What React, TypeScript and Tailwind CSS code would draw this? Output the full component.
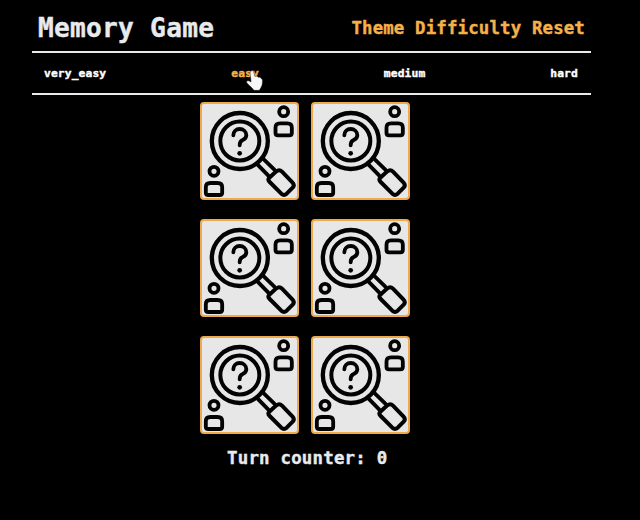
const cards = [0, 1, 2, 3, 4, 5];

function Person({ x, y }: { x: number; y: number }) {
  return (
    <g transform={`translate(${x} ${y})`}>
      <circle r="13.5" />
      <path d="M-24.5 64V48Q-24.5 35-11 35H11Q24.5 35 24.5 48V64Q24.5 71 17 71H-17Q-24.5 71-24.5 64Z" />
    </g>
  );
}

function CardBack() {
  return (
    <svg
      viewBox="21 26 285 282"
      preserveAspectRatio="none"
      className="block h-full w-full"
      fill="none"
      stroke="#030303"
      strokeWidth="11.5"
      strokeLinecap="round"
      strokeLinejoin="round"
    >
      <circle cx="134.5" cy="137" r="84" strokeWidth="13" />
      <circle cx="134.5" cy="137" r="58.5" strokeWidth="12" />
      <path d="M115 120C115 109 123 101 134 101C145 101 154 109 154 120C154 128 149 132 142 135C136 138 134 142 134 150" />
      <circle cx="134" cy="174" r="7" fill="#030303" stroke="none" />
      <path d="M187 207L220 241M204 190L238 223" />
      <path
        d="M223 247L244 228Q253 221 261 229L292 261Q300 269 293 277L275 295Q267 302 259 295L224 260Q217 253 223 247Z"
        strokeWidth="12"
      />
      <Person x={266} y={49} />
      <Person x={57} y={228} />
    </svg>
  );
}

export default function App() {
  return (
    <main className="h-[520px] w-[640px] overflow-hidden bg-black pl-8 font-['DejaVu_Sans_Mono',monospace] font-bold text-white [-webkit-text-stroke:0.4px_currentColor]">
      <div className="w-[559px]">
        <header className="flex h-[53px] items-center justify-between border-b-2 border-[#e8eaec] pr-[6px] pb-[1px] pl-[6px]">
          <h1 className="pt-[6px] text-[26.2px] leading-8 tracking-[0.25px] text-[#e8eaec]">Memory Game</h1>
          <nav className="flex gap-[10.6px] pt-[6px] text-[17.4px] leading-6 tracking-[0.15px] text-[#f5b049]">
            <span>Theme</span>
            <span>Difficulty</span>
            <span>Reset</span>
          </nav>
        </header>
        <div className="flex h-[42px] items-center justify-between border-b-2 border-[#e8eaec] pt-[2px] pr-[13px] pl-3 text-[11.3px] leading-4 tracking-[0.12px]">
          <span>very_easy</span>
          <span className="relative text-[#f5b049]">
            easy
            <svg viewBox="0 0 16 20" preserveAspectRatio="none" className="absolute top-[4px] left-[15px] h-[21px] w-[17px]">
              <path
                d="M4.5 1Q6.5-.3 7.3 2L8.3 6L10.1 6Q11.2 6 11.5 7L13 6.9Q14 7.1 14.2 8Q15.5 8 15.5 10Q15.8 14 14 17L12.5 19.4H7.5L5.5 17L1 12.5Q0 11 1.4 10.3Q2.5 9.8 4.8 11.5L3.9 3Q3.7 1.5 4.5 1Z"
                fill="#f8f8f8"
                stroke="#111111"
                strokeWidth=".4"
              />
            </svg>
          </span>
          <span>medium</span>
          <span>hard</span>
        </div>
        <section className="mt-[7px] ml-[168px] grid w-[210px] grid-cols-2 gap-x-3 gap-y-[19px]">
          {cards.map((card) => (
            <div
              key={card}
              className="h-[98px] w-[99px] overflow-hidden rounded-[4px] border-2 border-[#eda94b] bg-[#e7e7e7]"
            >
              <CardBack />
            </div>
          ))}
        </section>
        <p className="mt-3 ml-[195px] text-[17.4px] leading-6 tracking-[0.22px] text-[#e8eaec]">Turn counter: 0</p>
      </div>
    </main>
  );
}
